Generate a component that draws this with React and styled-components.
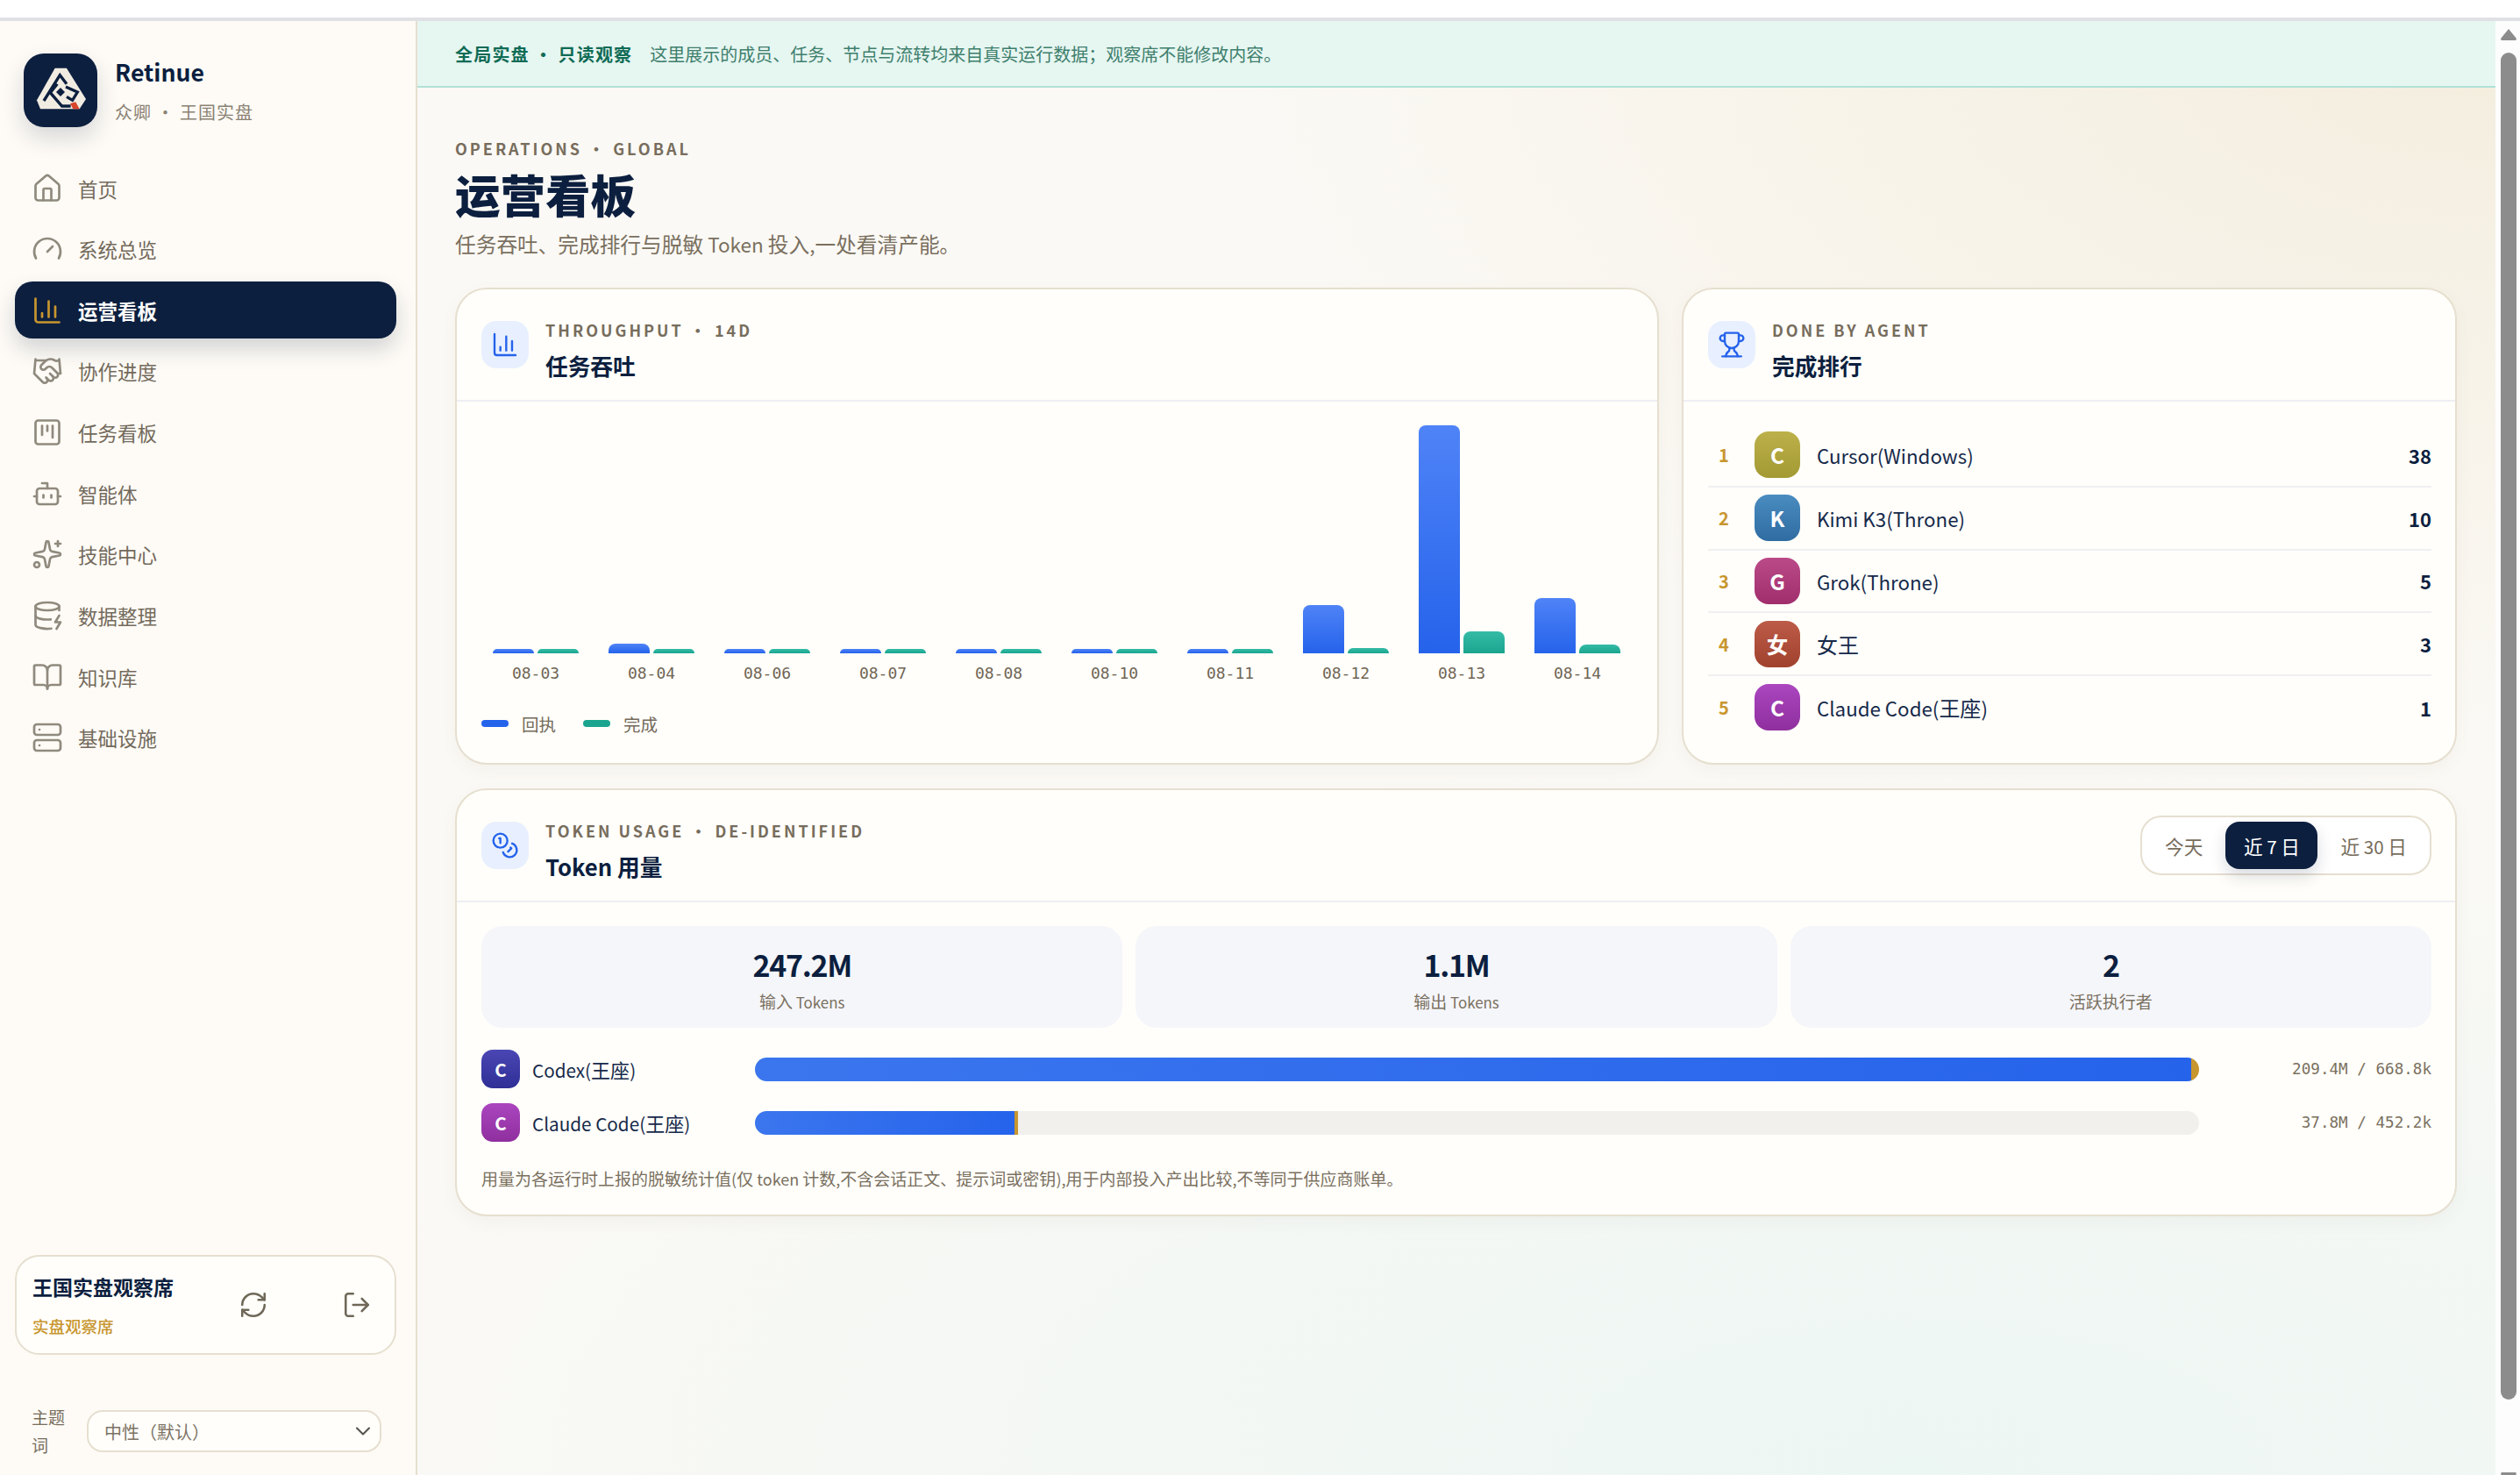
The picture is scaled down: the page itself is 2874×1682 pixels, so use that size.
import React from 'react'
import styled, { createGlobalStyle } from 'styled-components'
import {
  House, Gauge, ChartColumn, Handshake, SquareKanban, Bot, Sparkles,
  DatabaseZap, BookOpen, Server, RefreshCw, LogOut, ChevronDown, Trophy, Coins,
} from 'lucide-react'

const navy = '#0c1f3f'
const line = '#e6dfd0'
const muted = '#776d5d'
const gold = '#c8962f'
const sans = '"Noto Sans CJK SC", "Noto Sans", sans-serif'
const mono = '"DejaVu Sans Mono", "Noto Sans CJK SC", monospace'

const navItems = [
  { label: '首页', icon: House },
  { label: '系统总览', icon: Gauge },
  { label: '运营看板', icon: ChartColumn, active: true },
  { label: '协作进度', icon: Handshake },
  { label: '任务看板', icon: SquareKanban },
  { label: '智能体', icon: Bot },
  { label: '技能中心', icon: Sparkles },
  { label: '数据整理', icon: DatabaseZap },
  { label: '知识库', icon: BookOpen },
  { label: '基础设施', icon: Server },
]

const days = [
  { day: '08-03', sent: 5, done: 5 },
  { day: '08-04', sent: 11, done: 5 },
  { day: '08-06', sent: 5, done: 5 },
  { day: '08-07', sent: 5, done: 5 },
  { day: '08-08', sent: 5, done: 5 },
  { day: '08-10', sent: 5, done: 5 },
  { day: '08-11', sent: 5, done: 5 },
  { day: '08-12', sent: 55, done: 6 },
  { day: '08-13', sent: 260, done: 25 },
  { day: '08-14', sent: 63, done: 10 },
]

const ranking = [
  { name: 'Cursor(Windows)', mark: 'C', count: 38, from: '#bcb04a', to: '#a39a33' },
  { name: 'Kimi K3(Throne)', mark: 'K', count: 10, from: '#4a8cc0', to: '#2f6ca2' },
  { name: 'Grok(Throne)', mark: 'G', count: 5, from: '#bb4a88', to: '#a02e6c' },
  { name: '女王', mark: '女', count: 3, from: '#bc5b48', to: '#a0412e' },
  { name: 'Claude Code(王座)', mark: 'C', count: 1, from: '#ab46bf', to: '#8f2f9e' },
]

const stats = [
  { value: '247.2M', label: '输入 Tokens' },
  { value: '1.1M', label: '输出 Tokens' },
  { value: '2', label: '活跃执行者' },
]

const usage = [
  { name: 'Codex(王座)', mark: 'C', from: '#4a46b4', to: '#2f2f96', input: 99.45, output: 0.55, text: '209.4M / 668.8k' },
  { name: 'Claude Code(王座)', mark: 'C', from: '#ab46bf', to: '#8f2f9e', input: 18.0, output: 0.2, text: '37.8M / 452.2k' },
]

const GlobalStyle = createGlobalStyle`
  html, body {
    margin: 0;
    height: 1682px;
    overflow: hidden;
    background: #fff;
    font-family: ${sans};
  }
  * { box-sizing: border-box; }
`

const Page = styled.div`
  width: 2874px;
  height: 1682px;
  display: flex;
  flex-direction: column;
  overflow: hidden;
`

const TopStrip = styled.div`
  height: 24px;
  flex: none;
  background: #fff;
  border-bottom: 4px solid #e0e1e4;
`

const Shell = styled.div`
  flex: 1;
  min-height: 0;
  display: flex;
`

const Sidebar = styled.aside`
  width: 476px;
  flex: none;
  display: flex;
  flex-direction: column;
  padding: 37px 22px 18px 17px;
  background: #fefbf6;
  border-right: 2px solid ${line};
`

const Brand = styled.div`
  display: flex;
  gap: 20px;
  padding-left: 10px;
  height: 84px;
  margin-bottom: 37px;
`

const LogoTile = styled.div`
  width: 84px;
  height: 84px;
  flex: none;
  border-radius: 23px;
  overflow: hidden;
  background: ${navy};
  box-shadow: 0 12px 26px rgba(12, 31, 63, 0.16);
  svg { display: block; }
`

const BrandName = styled.div`
  font-size: 26.7px;
  line-height: 38px;
  margin-top: 2px;
  font-weight: 600;
  color: ${navy};
`

const BrandSub = styled.div`
  font-size: 20px;
  line-height: 28px;
  margin-top: 13px;
  color: #8a8274;
  letter-spacing: 1px;
`

const Nav = styled.nav`
  display: flex;
  flex-direction: column;
  gap: 4.67px;
`

const NavItem = styled.a`
  height: 65px;
  display: flex;
  align-items: center;
  gap: 17px;
  padding-left: 19px;
  border-radius: 20px;
  font-size: 22.5px;
  font-weight: ${p => (p.$active ? 700 : 400)};
  color: ${p => (p.$active ? '#fff' : '#736a5c')};
  background: ${p => (p.$active ? navy : 'transparent')};
  box-shadow: ${p => (p.$active ? '0 12px 24px rgba(12, 31, 63, 0.18)' : 'none')};
  svg { color: ${p => (p.$active ? gold : '#908a7e')}; flex: none; }
`

const SideFooter = styled.div`
  margin-top: auto;
`

const ViewerCard = styled.div`
  height: 114px;
  display: flex;
  align-items: center;
  padding: 0 9px 0 18px;
  border: 2px solid ${line};
  border-radius: 28px;
  background: #fffefb;
  gap: 50px;
`

const ViewerText = styled.div`
  flex: 1;
`

const ViewerName = styled.div`
  font-size: 23px;
  line-height: 32px;
  font-weight: 700;
  color: ${navy};
`

const ViewerRole = styled.div`
  font-size: 18.5px;
  line-height: 26px;
  margin-top: 16px;
  font-weight: 500;
  color: ${gold};
`

const IconButton = styled.button`
  width: 68px;
  height: 68px;
  flex: none;
  display: flex;
  align-items: center;
  justify-content: center;
  border: none;
  padding: 0;
  background: transparent;
  color: #6f6858;
`

const ThemeRow = styled.div`
  display: flex;
  align-items: center;
  gap: 24px;
  margin-top: 55px;
  padding-left: 19px;
`

const ThemeLabel = styled.div`
  width: 39px;
  font-size: 19px;
  line-height: 32px;
  color: #776d5d;
`

const ThemeSelect = styled.div`
  width: 336px;
  height: 48px;
  display: flex;
  align-items: center;
  justify-content: space-between;
  padding: 0 5px 0 18px;
  border: 2px solid ${line};
  border-radius: 18px;
  background: #fffefb;
  font-size: 20px;
  color: #7c7364;
  svg { color: #55534b; }
`

const Main = styled.main`
  flex: 1;
  min-width: 0;
  display: flex;
  flex-direction: column;
  background:
    radial-gradient(ellipse 62% 50% at 100% 0%, #f3eddd 0%, rgba(243, 237, 221, 0) 100%),
    radial-gradient(ellipse 80% 50% at 72% 100%, #ecf6f3 0%, rgba(236, 246, 243, 0) 100%),
    #fbf9f5;
`

const Banner = styled.div`
  height: 76px;
  flex: none;
  display: flex;
  align-items: center;
  gap: 20px;
  padding-left: 43px;
  background: #e6f6f1;
  border-bottom: 2px solid #b1e2d6;
  font-size: 20px;
  color: #3e7f6d;
`

const BannerStrong = styled.strong`
  font-weight: 700;
  letter-spacing: 1.2px;
  color: #0f6b55;
`

const Content = styled.div`
  padding: 55px 44px 0 43px;
`

const Kicker = styled.div`
  font-size: 18px;
  line-height: 28px;
  font-weight: 600;
  letter-spacing: 3px;
  color: ${muted};
`

const PageTitle = styled.h1`
  margin: 5px 0 0;
  font-size: 51.5px;
  line-height: 66px;
  font-weight: 800;
  color: ${navy};
`

const PageSub = styled.p`
  margin: 6px 0 32px;
  font-size: 23.7px;
  line-height: 36px;
  color: #7a705f;
`

const TopGrid = styled.div`
  display: grid;
  grid-template-columns: 1373px 884px;
  grid-template-rows: 544px;
  gap: 26px;
`

const Card = styled.section`
  border: 2px solid ${line};
  border-radius: 36px;
  background: #fffefa;
  box-shadow: 0 6px 18px rgba(120, 105, 80, 0.05);
  overflow: hidden;
`

const TokenCard = styled(Card)`
  margin-top: 27px;
  height: 488px;
  overflow: visible;
`

const CardHead = styled.header`
  height: 128px;
  display: flex;
  align-items: center;
  gap: 19px;
  padding: 0 27px 0 28px;
  border-bottom: 2px solid #eeeef3;
`

const IconTile = styled.div`
  width: 54px;
  height: 54px;
  flex: none;
  display: flex;
  align-items: center;
  justify-content: center;
  border-radius: 17px;
  background: #e8f0ff;
  color: #2563eb;
`

const HeadText = styled.div`
  padding-top: 13px;
`

const CardKicker = styled.div`
  font-size: 18px;
  line-height: 26px;
  font-weight: 600;
  letter-spacing: 3px;
  color: ${muted};
`

const CardTitle = styled.h2`
  margin: 9px 0 0;
  font-size: 25.7px;
  line-height: 38px;
  font-weight: 700;
  color: ${navy};
`

const ChartBody = styled.div`
  padding: 27px 28px 0;
`

const ChartGrid = styled.div`
  display: grid;
  grid-template-columns: repeat(10, 124px);
  column-gap: 8px;
`

const Column = styled.div`
  display: flex;
  flex-direction: column;
  align-items: center;
`

const Bars = styled.div`
  height: 260px;
  display: flex;
  align-items: flex-end;
  gap: 4px;
`

const Bar = styled.div`
  width: 47px;
  height: ${p => p.$h}px;
  border-radius: ${p => Math.min(p.$h, 8)}px ${p => Math.min(p.$h, 8)}px 0 0;
  background: ${p => (p.$kind === 'sent'
    ? 'linear-gradient(180deg, #4f83f7, #2563eb)'
    : 'linear-gradient(180deg, #34bba6, #1ba58f)')};
`

const DayLabel = styled.div`
  margin-top: 10px;
  font-family: ${mono};
  font-size: 18px;
  line-height: 26px;
  color: #6f6555;
`

const Legend = styled.div`
  display: flex;
  align-items: center;
  margin-top: 30px;
  height: 28px;
`

const LegendItem = styled.div`
  display: flex;
  align-items: center;
  gap: 15px;
  margin-right: 31px;
  font-size: 19.5px;
  color: #736a5b;
`

const Swatch = styled.span`
  width: 31px;
  height: 8px;
  border-radius: 4px;
  background: ${p => p.$color};
`

const RankList = styled.div`
  padding: 26px 27px 0 28px;
`

const RankRow = styled.div`
  height: 71.75px;
  display: flex;
  align-items: center;
  border-bottom: ${p => (p.$last ? 'none' : '2px solid #f0eff2')};
`

const RankNo = styled.div`
  width: 36px;
  margin-right: 17px;
  text-align: center;
  font-size: 20px;
  font-weight: 700;
  color: ${gold};
`

const Avatar = styled.div`
  width: ${p => p.$size}px;
  height: ${p => (p.$size === 44 ? 44 : 53)}px;
  flex: none;
  display: flex;
  align-items: center;
  justify-content: center;
  border-radius: ${p => (p.$size === 44 ? 13 : 16)}px;
  background: linear-gradient(180deg, ${p => p.$from}, ${p => p.$to});
  color: #fff;
  font-weight: 700;
  font-size: ${p => (p.$size === 44 ? 20.5 : 24.5)}px;
`

const RankName = styled.div`
  flex: 1;
  margin-left: 19px;
  font-size: 24px;
  color: #16294a;
`

const RankCount = styled.div`
  font-size: 22px;
  font-weight: 600;
  color: ${navy};
`

const Segmented = styled.div`
  margin-left: auto;
  height: 68px;
  display: flex;
  align-items: center;
  padding: 0 26px;
  border: 2px solid ${line};
  border-radius: 24px;
  background: #fff;
`

const Segment = styled.button`
  height: 54px;
  width: ${p => (p.$active ? '105px' : 'auto')};
  padding: 0;
  margin: 0 ${p => (p.$active ? 26 : 0)}px;
  border: none;
  border-radius: 16px;
  background: ${p => (p.$active ? navy : 'transparent')};
  color: ${p => (p.$active ? '#fff' : muted)};
  font-family: ${sans};
  font-size: 21.7px;
  box-shadow: ${p => (p.$active ? '0 8px 18px rgba(12, 31, 63, 0.16)' : 'none')};
`

const TokenBody = styled.div`
  padding: 27px 27px 0 28px;
`

const StatRow = styled.div`
  display: grid;
  grid-template-columns: repeat(3, 1fr);
  gap: 15px;
`

const Stat = styled.div`
  height: 116px;
  padding-top: 21px;
  border-radius: 24px;
  background: #f5f6fa;
  text-align: center;
`

const StatValue = styled.div`
  font-size: 34px;
  line-height: 46px;
  font-weight: 700;
  letter-spacing: -1.3px;
  color: ${navy};
`

const StatLabel = styled.div`
  margin-top: 5px;
  font-size: 19px;
  line-height: 28px;
  color: #7a705f;
`

const UsageList = styled.div`
  display: flex;
  flex-direction: column;
  gap: 17px;
  margin-top: 25px;
`

const UsageRow = styled.div`
  display: grid;
  grid-template-columns: 312px 1fr 265px;
  align-items: center;
  height: 44px;
`

const UsageName = styled.div`
  display: flex;
  align-items: center;
  gap: 14px;
  font-size: 22px;
  color: #16294a;
`

const Track = styled.div`
  height: 27px;
  display: flex;
  overflow: hidden;
  border-radius: 14px;
  background: #f1f0ed;
`

const FillInput = styled.div`
  background: linear-gradient(90deg, #3b76ee, #2563eb);
`

const FillOutput = styled.div`
  min-width: 2px;
  background: ${gold};
`

const UsageValue = styled.div`
  text-align: right;
  font-family: ${mono};
  font-size: 17.6px;
  color: #7a705f;
`

const Note = styled.p`
  margin: 27px 0 0;
  font-size: 19px;
  line-height: 30px;
  color: #7a705f;
`

const Scrollbar = styled.div`
  width: 28px;
  flex: none;
  display: flex;
  flex-direction: column;
  align-items: center;
  padding: 9px 4px 0 6px;
  background: #fdfdfd;
`

const ScrollArrow = styled.div`
  width: 18px;
  height: 13px;
  flex: none;
  background: #8c8c8c;
  clip-path: polygon(50% 0, 100% 85%, 96% 100%, 4% 100%, 0 85%);
  transform: ${p => (p.$down ? 'rotate(180deg)' : 'none')};
`

const ScrollThumb = styled.div`
  width: 18px;
  height: 1536px;
  flex: none;
  margin: 14px 0 83px;
  border-radius: 9px;
  background: #8c8c8c;
`

// latin runs sit a little smaller than the CJK around them
const LatinRun = styled.span`
  font-size: ${p => p.$scale}em;
`

const Mixed = ({ text, scale = 0.89 }) => (
  <>
    {String(text).split(/([\u4e00-\u9fff]+)/).map((part, i) => (
      i % 2 ? part : <LatinRun key={i} $scale={scale}>{part}</LatinRun>
    ))}
  </>
)

const Logo = () => (
  <svg width="84" height="84" viewBox="21 18 252 252" aria-hidden="true">
    <path fill="#f1ece2" d="M128 68 L168 68 L234 174 L212 208 L78 208 L66 178 Z" />
    <path
      fill="none"
      stroke={navy}
      strokeWidth="10"
      strokeLinejoin="miter"
      d="M90 180 L145 92 L168 122 M136 122 L112 152 L152 198 L182 198 M165 132 L205 150 L188 178 L168 166"
    />
    <path fill={navy} d="M147 135 L162 150 L147 165 L132 150 Z" />
    <path fill="#d9452b" d="M180 189 L199 184 L212 208 L190 208 Z" />
  </svg>
)

const App = () => {
  return (
    <Page>
      <GlobalStyle />
      <TopStrip />
      <Shell>
        <Sidebar>
          <Brand>
            <LogoTile><Logo /></LogoTile>
            <div>
              <BrandName>Retinue</BrandName>
              <BrandSub>众卿 · 王国实盘</BrandSub>
            </div>
          </Brand>
          <Nav>
            {navItems.map(({ label, icon: Icon, active }) => (
              <NavItem key={label} $active={active}>
                <Icon size={36} strokeWidth={1.8} />
                {label}
              </NavItem>
            ))}
          </Nav>
          <SideFooter>
            <ViewerCard>
              <ViewerText>
                <ViewerName>王国实盘观察席</ViewerName>
                <ViewerRole>实盘观察席</ViewerRole>
              </ViewerText>
              <IconButton><RefreshCw size={34} strokeWidth={1.8} /></IconButton>
              <IconButton><LogOut size={34} strokeWidth={1.8} /></IconButton>
            </ViewerCard>
            <ThemeRow>
              <ThemeLabel>主题词</ThemeLabel>
              <ThemeSelect>
                中性（默认）
                <ChevronDown size={28} strokeWidth={1.8} />
              </ThemeSelect>
            </ThemeRow>
          </SideFooter>
        </Sidebar>

        <Main>
          <Banner>
            <BannerStrong>全局实盘 · 只读观察</BannerStrong>
            <span>这里展示的成员、任务、节点与流转均来自真实运行数据；观察席不能修改内容。</span>
          </Banner>
          <Content>
            <Kicker>OPERATIONS · GLOBAL</Kicker>
            <PageTitle>运营看板</PageTitle>
            <PageSub><Mixed text="任务吞吐、完成排行与脱敏 Token 投入,一处看清产能。" scale={0.95} /></PageSub>

            <TopGrid>
              <Card>
                <CardHead>
                  <IconTile><ChartColumn size={32} strokeWidth={1.8} /></IconTile>
                  <HeadText>
                    <CardKicker>THROUGHPUT · 14D</CardKicker>
                    <CardTitle>任务吞吐</CardTitle>
                  </HeadText>
                </CardHead>
                <ChartBody>
                  <ChartGrid>
                    {days.map(d => (
                      <Column key={d.day}>
                        <Bars>
                          <Bar $kind="sent" $h={d.sent} />
                          <Bar $kind="done" $h={d.done} />
                        </Bars>
                        <DayLabel>{d.day}</DayLabel>
                      </Column>
                    ))}
                  </ChartGrid>
                  <Legend>
                    <LegendItem><Swatch $color="#2563eb" />回执</LegendItem>
                    <LegendItem><Swatch $color="#1ba58f" />完成</LegendItem>
                  </Legend>
                </ChartBody>
              </Card>

              <Card>
                <CardHead>
                  <IconTile><Trophy size={32} strokeWidth={1.8} /></IconTile>
                  <HeadText>
                    <CardKicker>DONE BY AGENT</CardKicker>
                    <CardTitle>完成排行</CardTitle>
                  </HeadText>
                </CardHead>
                <RankList>
                  {ranking.map((r, i) => (
                    <RankRow key={r.name} $last={i === ranking.length - 1}>
                      <RankNo>{i + 1}</RankNo>
                      <Avatar $size={52} $from={r.from} $to={r.to}>{r.mark}</Avatar>
                      <RankName><Mixed text={r.name} scale={0.93} /></RankName>
                      <RankCount>{r.count}</RankCount>
                    </RankRow>
                  ))}
                </RankList>
              </Card>
            </TopGrid>

            <TokenCard>
              <CardHead>
                <IconTile><Coins size={32} strokeWidth={1.8} /></IconTile>
                <HeadText>
                  <CardKicker>TOKEN USAGE · DE-IDENTIFIED</CardKicker>
                  <CardTitle>Token 用量</CardTitle>
                </HeadText>
                <Segmented>
                  <Segment>今天</Segment>
                  <Segment $active><Mixed text="近 7 日" scale={0.95} /></Segment>
                  <Segment><Mixed text="近 30 日" scale={0.95} /></Segment>
                </Segmented>
              </CardHead>
              <TokenBody>
                <StatRow>
                  {stats.map(s => (
                    <Stat key={s.label}>
                      <StatValue>{s.value}</StatValue>
                      <StatLabel><Mixed text={s.label} /></StatLabel>
                    </Stat>
                  ))}
                </StatRow>
                <UsageList>
                  {usage.map(u => (
                    <UsageRow key={u.name}>
                      <UsageName>
                        <Avatar $size={44} $from={u.from} $to={u.to}>{u.mark}</Avatar>
                        <span><Mixed text={u.name} scale={0.94} /></span>
                      </UsageName>
                      <Track>
                        <FillInput style={{ width: `${u.input}%` }} />
                        <FillOutput style={{ width: `${u.output}%` }} />
                      </Track>
                      <UsageValue>{u.text}</UsageValue>
                    </UsageRow>
                  ))}
                </UsageList>
                <Note><Mixed text="用量为各运行时上报的脱敏统计值(仅 token 计数,不含会话正文、提示词或密钥),用于内部投入产出比较,不等同于供应商账单。" scale={0.95} /></Note>
              </TokenBody>
            </TokenCard>
          </Content>
        </Main>

        <Scrollbar>
          <ScrollArrow />
          <ScrollThumb />
          <ScrollArrow $down />
        </Scrollbar>
      </Shell>
    </Page>
  )
}

export default App
